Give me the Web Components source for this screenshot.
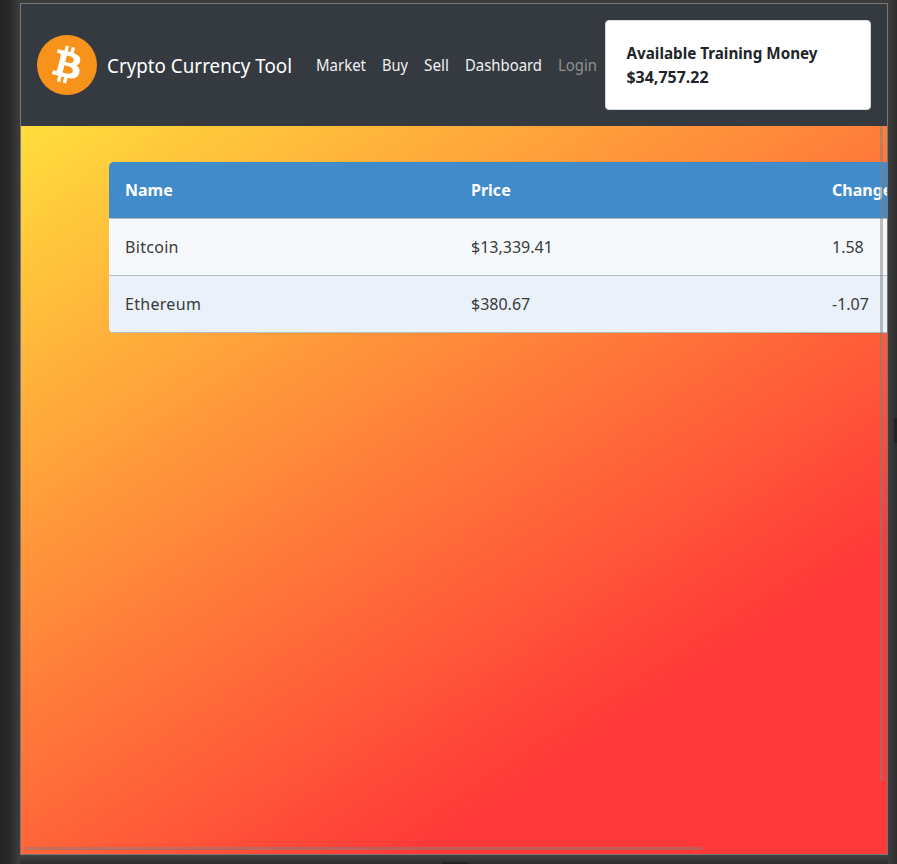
<!DOCTYPE html>
<html lang="en">
<head>
<meta charset="utf-8">
<title>Crypto Currency Tool</title>
<style>
html,body{margin:0;height:100%;overflow:hidden}
body{background:#3b3b3b;font-family:"Noto Sans","Open Sans",sans-serif;font-size:16px}
</style>
</head>
<body>
<device-frame>
  <nav-bar slot="nav">
    <brand-mark>Crypto Currency Tool</brand-mark>
    <nav-item style="--w:50px">Market</nav-item>
    <nav-item style="--w:26px">Buy</nav-item>
    <nav-item style="--w:25px">Sell</nav-item>
    <nav-item style="--w:77px">Dashboard</nav-item>
    <nav-item disabled style="--w:39px">Login</nav-item>
    <money-card slot="end" amount="$34,757.22">Available Training Money</money-card>
  </nav-bar>
  <coin-table></coin-table>
</device-frame>
<script>
function define(name, html, setup) {
  const t = document.createElement('template');
  t.innerHTML = html;
  customElements.define(name, class extends HTMLElement {
    constructor() {
      super();
      this.attachShadow({mode: 'open'}).append(t.content.cloneNode(true));
    }
    connectedCallback() { if (setup) setup(this, this.shadowRoot); }
  });
}

/* Stretches a line of text to a given advance width. */
function fitText(svgText, value, width) {
  svgText.textContent = value;
  svgText.setAttribute('textLength', width);
}

define('device-frame', `
<style>
:host{display:block;box-sizing:border-box;width:897px;height:864px;padding:3px 9px 9px 20px;position:relative;
  background:linear-gradient(90deg,#252525 0,#282828 9px,#3e3e3e 20px,#3e3e3e 888px,#2d2d2d 897px)}
:host::before{content:"";position:absolute;left:20px;right:9px;top:0;height:3px;background:#3b3b3b}
:host::after{content:"";position:absolute;left:20px;right:9px;bottom:0;height:9px;background:linear-gradient(#434343,#2c2c2c)}
.screen{box-sizing:border-box;width:868px;height:852px;border:1px solid #777;position:relative;overflow:hidden;display:flex;flex-direction:column}
.page{flex:1;overflow:hidden;padding:36px 0 0 88px;box-sizing:border-box;
  background:linear-gradient(to bottom right,#ffdd3c 0,#ff3838 68.5%) 0 0/1100px 728px no-repeat}
.v,.h,.gv,.gh{position:absolute;background:rgba(128,128,128,.5);z-index:1}
.v{left:859px;top:122px;width:3px;height:655px}
.h{left:4px;top:843px;width:677px;height:3px}
.gv{right:0;top:418px;width:3px;height:25px;background:#222}
.gh{left:442px;bottom:0;width:26px;height:2px;background:#222;z-index:2}
</style>
<div class="screen"><slot name="nav"></slot><div class="page"><slot></slot></div><i class="v"></i><i class="h"></i></div>
<i class="gv"></i><i class="gh"></i>`);

define('nav-bar', `
<style>
:host{display:flex;box-sizing:border-box;height:122px;padding:0 16px;align-items:center;background:#343a40;flex:none}
.end{margin-left:auto}
</style>
<slot></slot><div class="end"><slot name="end"></slot></div>`);

define('brand-mark', `
<style>
:host{display:flex;align-items:center;gap:10px;margin-right:16px;color:#fff}
svg{display:block;overflow:visible}
text{font:20px "Noto Sans","Open Sans",sans-serif;fill:#fff}
</style>
<svg width="60" height="60" viewBox="0 0 64 64"><circle cx="32" cy="32" r="32" fill="#f7931a"/>
<path fill="#fff" d="M46.11 27.44c.63-4.26-2.61-6.55-7.04-8.08l1.44-5.76-3.51-.87-1.4 5.61c-.92-.23-1.87-.45-2.81-.66l1.41-5.65-3.51-.87-1.43 5.76c-.77-.17-1.52-.34-2.24-.53v-.01l-4.84-1.21-.93 3.75s2.6.6 2.55.63c1.42.36 1.68 1.3 1.63 2.04l-1.64 6.57c.1.02.23.06.37.12l-.37-.1-2.3 9.2c-.17.43-.61 1.08-1.61.84.04.05-2.55-.64-2.55-.64l-1.74 4.02 4.56 1.14c.85.21 1.69.43 2.5.64l-1.45 5.83 3.5.88 1.44-5.77c.96.26 1.89.5 2.8.73l-1.43 5.74 3.51.87 1.45-5.82c5.99 1.13 10.5.68 12.4-4.74 1.53-4.36-.08-6.87-3.23-8.51 2.29-.53 4.02-2.04 4.48-5.15zM38.08 38.7c-1.09 4.36-8.43 2-10.81 1.41l1.93-7.73c2.38.6 10.01 1.77 8.88 6.32zm1.09-11.32c-.99 3.97-7.1 1.95-9.08 1.46l1.75-7.01c1.98.49 8.36 1.41 7.33 5.55z"/></svg>
<svg width="185" height="30"><text x="0" y="23" lengthAdjust="spacingAndGlyphs"></text></svg>
<slot hidden></slot>`, (h, r) => fitText(r.querySelector('text'), h.textContent.trim(), 185));

define('nav-item', `
<style>
:host{display:block;padding:0 8px}
svg{display:block;overflow:visible}
text{font:16px "Noto Sans","Open Sans",sans-serif;fill:#f0f1f2}
:host([disabled]) text{fill:#8e9092}
</style>
<svg height="24"><text x="0" y="18" lengthAdjust="spacingAndGlyphs"></text></svg>
<slot hidden></slot>`, (h, r) => {
  const w = parseFloat(h.style.getPropertyValue('--w'));
  r.querySelector('svg').setAttribute('width', w);
  fitText(r.querySelector('text'), h.textContent.trim(), w);
});

define('money-card', `
<style>
:host{display:block;box-sizing:border-box;width:266px;height:90px;padding:20px;border:1px solid #d8d9da;border-radius:4px;background:#fff}
svg{display:block;overflow:visible}
text{font:bold 15.5px "Noto Sans","Open Sans",sans-serif;fill:#212529}
</style>
<svg width="192" height="48"><text class="l" x="0.5" y="18" lengthAdjust="spacingAndGlyphs"></text><text class="a" x="0.5" y="42" lengthAdjust="spacingAndGlyphs"></text></svg>
<slot hidden></slot>`, (h, r) => {
  fitText(r.querySelector('.l'), h.textContent.trim(), 191);
  fitText(r.querySelector('.a'), h.getAttribute('amount'), 82);
});

define('coin-table', `
<style>
:host{display:block;width:1000px;border-radius:5px;overflow:hidden;font:16px/24px "Noto Sans","Open Sans",sans-serif;color:#3a3a3a}
.r{display:grid;grid-template-columns:346px 361px 1fr;height:57px;box-sizing:border-box;border-bottom:1px solid #b4bcc2;background:#f5f9fc;align-items:center}
.r:last-child{background:#eaf1f8}
.head{background:#428bca;color:#fff;font-weight:700}
span{padding-left:16px}
.n{letter-spacing:.3px}
</style>
<div class="r head"><span>Name</span><span>Price</span><span>Change</span></div>
<div class="r"><span class="n">Bitcoin</span><span>$13,339.41</span><span>1.58</span></div>
<div class="r"><span class="n">Ethereum</span><span>$380.67</span><span>-1.07</span></div>`);
</script>
</body>
</html>
